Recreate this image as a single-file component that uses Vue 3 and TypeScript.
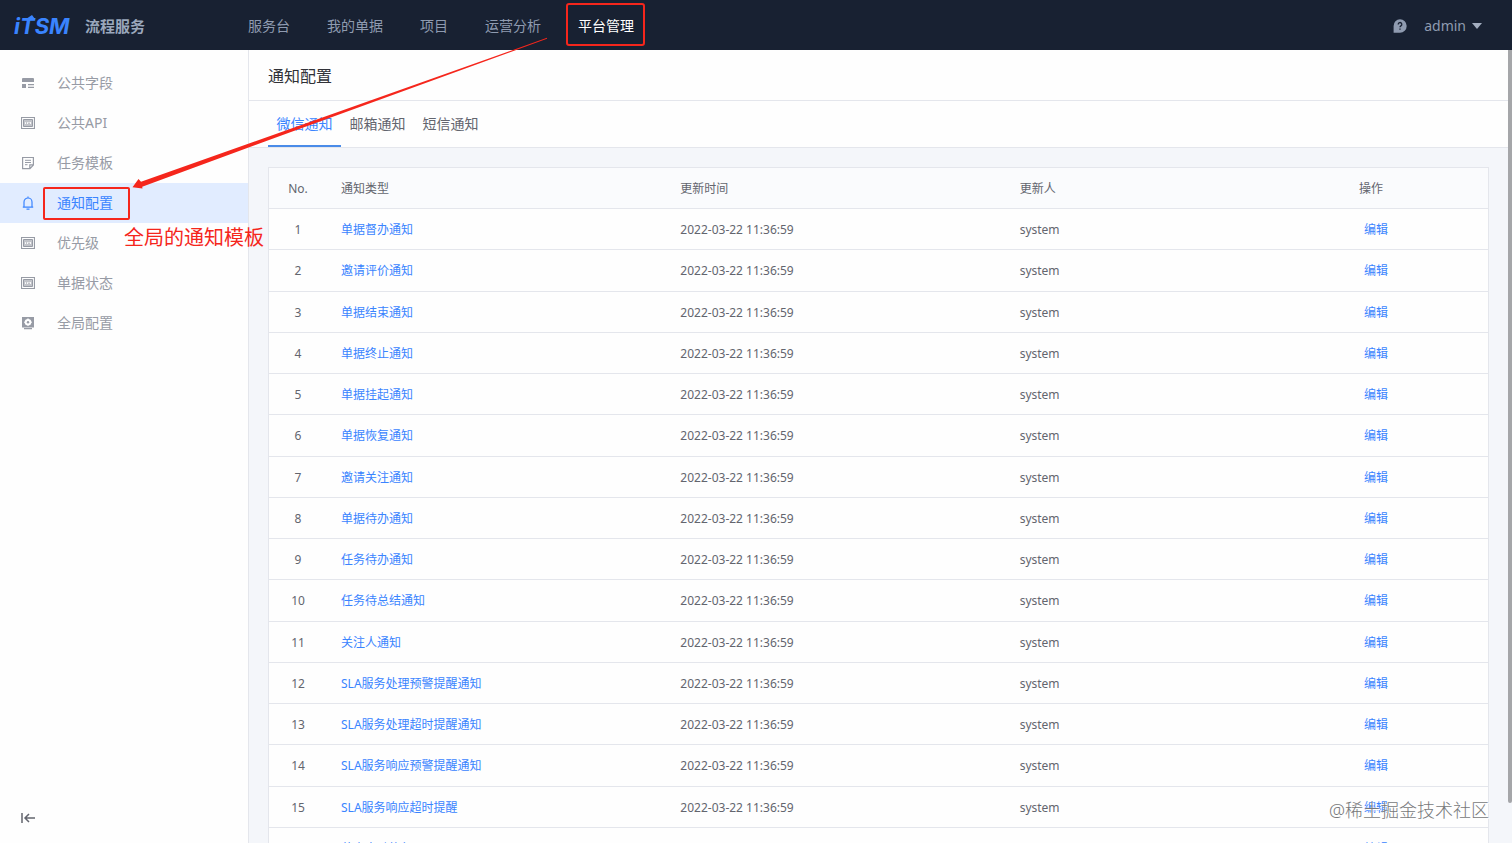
<script setup lang="ts">
import { ref } from 'vue'

type IconName = 'field' | 'card' | 'template' | 'bell' | 'gear'

interface MenuItem {
  label: string
  icon: IconName
}

const navItems: string[] = ['服务台', '我的单据', '项目', '运营分析', '平台管理']
const activeNav = '平台管理'

const menu: MenuItem[] = [
  { label: '公共字段', icon: 'field' },
  { label: '公共API', icon: 'card' },
  { label: '任务模板', icon: 'template' },
  { label: '通知配置', icon: 'bell' },
  { label: '优先级', icon: 'card' },
  { label: '单据状态', icon: 'card' },
  { label: '全局配置', icon: 'gear' },
]
const activeMenu = '通知配置'

const tabs: string[] = ['微信通知', '邮箱通知', '短信通知']
const activeTab = ref<string>('微信通知')

const types: string[] = [
  '单据督办通知',
  '邀请评价通知',
  '单据结束通知',
  '单据终止通知',
  '单据挂起通知',
  '单据恢复通知',
  '邀请关注通知',
  '单据待办通知',
  '任务待办通知',
  '任务待总结通知',
  '关注人通知',
  'SLA服务处理预警提醒通知',
  'SLA服务处理超时提醒通知',
  'SLA服务响应预警提醒通知',
  'SLA服务响应超时提醒',
  '节点自动执行',
]
const rows = types.map((type, i) => ({
  no: i + 1,
  type,
  time: '2022-03-22 11:36:59',
  user: 'system',
}))
</script>

<template>
  <div class="page">
    <header class="topbar">
      <a class="brand" href="#">
        <svg class="logo" width="60" height="26" viewBox="0 0 60 26" role="img" aria-label="iTSM">
          <text class="logo-text" x="0" y="21">iTSM</text>
          <path d="M12 6l6-4 3 4z" fill="#3a84ff" />
        </svg>
        <span class="brand-name">流程服务</span>
      </a>
      <nav class="nav">
        <a
          v-for="item in navItems"
          :key="item"
          href="#"
          class="nav-link"
          :class="{ active: item === activeNav }"
        >{{ item }}</a>
      </nav>
      <div class="user">
        <button class="plain" type="button" aria-label="帮助">
          <svg width="14" height="14" viewBox="0 0 14 14">
            <path d="M7 0.3a6.7 6.7 0 1 1 0 13.4H0.6V7A6.6 6.6 0 0 1 7 .3z" fill="#8f9bb0" />
            <path d="M5.2 5.4a1.8 1.8 0 1 1 2.7 1.5c-.6.4-.9.7-.9 1.4M7 9.6v1.2" fill="none" stroke="#182132" stroke-width="1.3" />
          </svg>
        </button>
        <button class="plain account" type="button">
          <span>admin</span>
          <svg width="10" height="6" viewBox="0 0 10 6"><path d="M0 0h10L5 6z" fill="#a3adbf" /></svg>
        </button>
      </div>
    </header>

    <div class="body">
      <aside class="sidebar">
        <nav class="menu">
          <a
            v-for="item in menu"
            :key="item.label"
            href="#"
            class="menu-item"
            :class="{ active: item.label === activeMenu }"
          >
            <svg class="icon" width="14" height="14" viewBox="0 0 14 14" fill="none" stroke="currentColor">
              <template v-if="item.icon === 'field'">
                <path d="M2 2h10a1 1 0 0 1 1 1v3H1V3a1 1 0 0 1 1-1zM1 8h4v4H1z" fill="currentColor" stroke="none" />
                <path d="M7 8.7h6M7 11.4h6" stroke-width="1.3" />
              </template>
              <template v-else-if="item.icon === 'card'">
                <path d="M.5 1.500h13v11H.5z" stroke-width="1.200" />
                <path d="M2.500 3.500h9v7h-9z" fill="currentColor" fill-opacity="0.600" />
                <path d="M4.500 8V6.200M6.500 8V6.200M7.500 6.500h1M9.500 6v2" stroke="#fff" stroke-opacity="0.900" />
              </template>
              <template v-else-if="item.icon === 'template'">
                <path d="M1.600 1.500h10.800v7.500l-3.400 3.700H1.600zM12.400 8.800H8.800v3.800" stroke-width="1.200" />
                <path d="M4 4.300h6M4 6.500h6M4 8.700h2.500" />
              </template>
              <template v-else-if="item.icon === 'bell'">
                <path d="M1.800 11.200h10.400M3 11V6a4 4 0 0 1 8 0v5M7 2V.6M5.500 13.200h3" stroke-width="1.200" />
              </template>
              <template v-else>
                <path d="M1 1h12v10.500H1zM3 12h8v1.200H3z" fill="currentColor" stroke="none" />
                <circle cx="7" cy="6.200" r="3.300" fill="#fff" stroke="none" />
                <path d="M7 2.300v7.800M3.100 6.200h7.800" stroke="#fff" />
                <circle cx="7" cy="6.200" r="1.200" fill="currentColor" stroke="none" />
              </template>
            </svg>
            <span class="menu-label">{{ item.label }}</span>
          </a>
        </nav>
        <button class="plain collapse" type="button" aria-label="收起菜单">
          <svg width="14" height="12" viewBox="0 0 14 12" fill="none" stroke="#63656e" stroke-width="1.500">
            <path d="M1 1v10M4 6h10M8 2L4 6l4 4" />
          </svg>
        </button>
      </aside>

      <main class="main">
        <h1 class="title">通知配置</h1>
        <div class="tabs" role="tablist">
          <button
            v-for="tab in tabs"
            :key="tab"
            type="button"
            role="tab"
            class="tab"
            :class="{ active: tab === activeTab }"
            :aria-selected="tab === activeTab"
            @click="activeTab = tab"
          >{{ tab }}</button>
        </div>
        <div class="content">
          <table class="table">
            <thead>
              <tr>
                <th class="no">No.</th>
                <th>通知类型</th>
                <th>更新时间</th>
                <th>更新人</th>
                <th class="ops">操作</th>
              </tr>
            </thead>
            <tbody>
              <tr v-for="row in rows" :key="row.no">
                <td class="no">{{ row.no }}</td>
                <td><a href="#" class="link">{{ row.type }}</a></td>
                <td>{{ row.time }}</td>
                <td>{{ row.user }}</td>
                <td class="ops"><button type="button" class="plain link edit">编辑</button></td>
              </tr>
            </tbody>
          </table>
        </div>
      </main>
      <div class="scroll"><div class="thumb"></div></div>
    </div>

    <svg class="arrow" width="560" height="200" viewBox="0 0 560 200" aria-hidden="true">
      <path d="M547 37.800L141 181.800 138.500 179 132.500 187.200 142.500 188.600 142.200 186.800 280 136 547 38.800z" fill="#f5261c" />
    </svg>
    <p class="note">全局的通知模板</p>
    <p class="watermark">@稀土掘金技术社区</p>
  </div>
</template>

<style>
body {
  margin: 0;
}
</style>

<style scoped>
.page {
  position: relative;
  display: flex;
  flex-direction: column;
  height: 100vh;
  overflow: hidden;
  background: #f4f6fa;
  color: #63656e;
  font-family: "Noto Sans", "Noto Sans CJK SC", sans-serif;
  font-size: 14px;
  line-height: 20px;
}
a {
  color: inherit;
  text-decoration: none;
}
svg {
  display: block;
}
.plain {
  display: block;
  padding: 0;
  border: 0;
  background: none;
  color: inherit;
  font: inherit;
  cursor: pointer;
}
.topbar {
  display: flex;
  align-items: center;
  flex: none;
  box-sizing: border-box;
  height: 50px;
  padding: 2px 30px 0 14px;
  background: #182132;
  color: #8f9bb0;
}
.brand {
  display: flex;
  align-items: center;
  gap: 11px;
  width: 234px;
}
.logo {
  overflow: visible;
}
.logo-text {
  fill: #3a84ff;
  font-family: Inter, sans-serif;
  font-size: 22px;
  font-style: italic;
  font-weight: 700;
}
.brand-name {
  color: #9aa7bc;
  font-size: 15px;
  font-weight: 700;
}
.nav {
  display: flex;
  gap: 37px;
  flex: 1;
}
.nav-link {
  position: relative;
}
.nav-link.active {
  color: #fff;
}
.nav-link.active::after {
  content: "";
  position: absolute;
  inset: -13px -11px -10px -12px;
  border: 2px solid #f5261c;
  border-radius: 3px;
}
.user {
  display: flex;
  align-items: center;
  gap: 17px;
}
.account {
  display: flex;
  align-items: center;
  gap: 6px;
}
.body {
  display: flex;
  flex: 1;
  min-height: 0;
}
.sidebar {
  display: flex;
  flex-direction: column;
  justify-content: space-between;
  flex: none;
  box-sizing: border-box;
  width: 249px;
  padding: 13px 0 19px;
  border-right: 1px solid #e4e6ec;
  background: #fefefe;
}
.menu-item {
  display: flex;
  align-items: center;
  gap: 22px;
  height: 40px;
  padding-left: 21px;
  color: #979ba5;
}
.menu-item.active {
  background: #e1ecff;
  color: #3a84ff;
}
.menu-label {
  position: relative;
}
.menu-item.active .menu-label::after {
  content: "";
  position: absolute;
  inset: -6px -17px -7px -14px;
  border: 2px solid #f5261c;
  border-radius: 2px;
}
.collapse {
  align-self: flex-start;
  margin-left: 21px;
}
.main {
  flex: 1;
  min-width: 0;
}
.title {
  margin: 0;
  padding: 16px 19px 14px;
  border-bottom: 1px solid #e4e6ec;
  background: #fefefe;
  color: #313238;
  font-size: 16px;
  font-weight: 400;
  line-height: 20px;
}
.tabs {
  display: flex;
  height: 46px;
  padding: 0 19px;
  border-bottom: 1px solid #e4e6ec;
  background: #fefefe;
}
.tab {
  width: 73px;
  padding: 2px 0 0;
  border: 0;
  border-bottom: 2px solid transparent;
  background: none;
  color: #63656e;
  font: inherit;
  white-space: nowrap;
  cursor: pointer;
}
.tab.active {
  border-bottom-color: #4a8be8;
  color: #3a84ff;
}
.content {
  padding: 19px 19px 0;
}
.table {
  width: 100%;
  height: 703px;
  table-layout: fixed;
  border: 1px solid #e4e6ec;
  border-spacing: 0;
  background: #fefefe;
  font-size: 12px;
}
th,
td {
  height: 38px;
  padding: 2px 14px 0;
  border-bottom: 1px solid #e4e6ec;
  text-align: left;
  font-weight: 400;
  white-space: nowrap;
}
th {
  background: #fafbfd;
}
.no {
  width: 58px;
  padding: 2px 0 0;
  text-align: center;
}
.ops {
  width: 115px;
}
.link {
  color: #3a84ff;
}
.edit {
  padding: 0 5px;
}
.scroll {
  flex: none;
  width: 4px;
}
.thumb {
  height: 95%;
  border-radius: 0 0 2px 2px;
  background: #a5a6a9;
}
.arrow {
  position: absolute;
  top: 0;
  left: 0;
  pointer-events: none;
}
.note {
  position: absolute;
  top: 226px;
  left: 124px;
  margin: 0;
  color: #f5261c;
  font-size: 20px;
  line-height: 24px;
}
.watermark {
  position: absolute;
  right: 23px;
  bottom: 21px;
  margin: 0;
  color: #77787a;
  font-size: 18px;
  font-weight: 300;
  line-height: 24px;
  text-shadow: 0 0 1px #fff, 1px 1px 0 #fff;
}
</style>
